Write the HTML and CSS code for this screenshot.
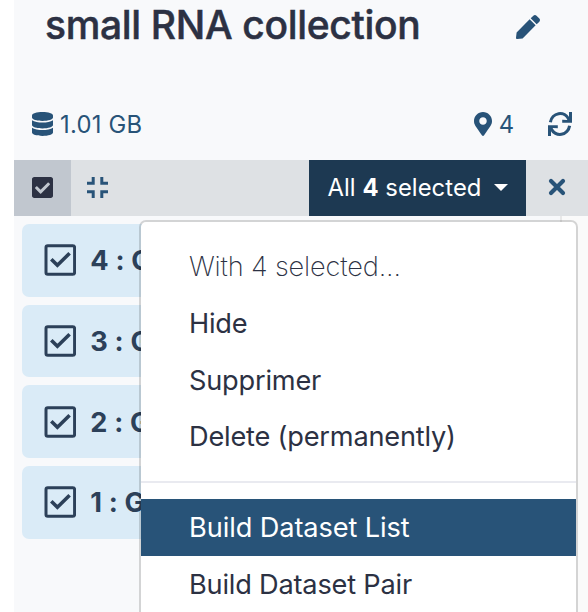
FILE: index.html
```html
<!DOCTYPE html>
<html lang="en">
<head>
<meta charset="utf-8">
<title>small RNA collection</title>
<link rel="stylesheet" href="styles.css">
</head>
<body>
<svg class="defs" aria-hidden="true">
  <symbol id="item-check" viewBox="0 0 32 32">
    <rect x="2" y="1.7" width="28.6" height="28.6" rx="1.8" fill="none" stroke="currentColor" stroke-width="3"/>
    <path d="M7.300 15.200l6.100 6.100L25.600 9.300" fill="none" stroke="currentColor" stroke-width="3.600"/>
  </symbol>
</svg>
<main class="panel">
  <header class="title-row">
    <h1>small RNA collection</h1>
    <svg class="pen" viewBox="0 0 512 512"><path d="M290.74 93.24l128.02 128.02-277.99 277.99-114.14 12.6C11.35 513.54-1.56 500.62.14 485.34l12.7-114.22 277.9-277.88zm207.2-19.06l-60.11-60.11c-18.75-18.75-49.16-18.75-67.91 0l-56.55 56.55 128.02 128.02 56.55-56.55c18.75-18.76 18.75-49.16 0-67.91z"/></svg>
  </header>
  <div class="stats">
    <svg class="db" viewBox="0 0 448 512"><path d="M448 73.143v45.714C448 159.143 347.667 192 224 192S0 159.143 0 118.857V73.143C0 32.857 100.333 0 224 0s224 32.857 224 73.143zM448 176v102.857C448 319.143 347.667 352 224 352S0 319.143 0 278.857V176c48.125 33.143 136.208 48.572 224 48.572S399.874 209.143 448 176zm0 160v102.857C448 479.143 347.667 512 224 512S0 479.143 0 438.857V336c48.125 33.143 136.208 48.572 224 48.572S399.874 369.143 448 336z"/></svg>
    <span class="size">1.01 GB</span>
    <svg class="pin" viewBox="0 0 384 512"><path d="M172.268 501.67C26.97 291.031 0 269.413 0 192 0 85.961 85.961 0 192 0s192 85.961 192 192c0 77.413-26.97 99.031-172.268 309.67-9.535 13.774-29.93 13.773-39.464 0zM192 272c44.183 0 80-35.817 80-80s-35.817-80-80-80-80 35.817-80 80 35.817 80 80 80z"/></svg>
    <span class="count">4</span>
    <svg class="sync" viewBox="0 0 24 24"><g fill="none" stroke="currentColor" stroke-width="3.1"><path d="M2.4 10.2A9.8 10.300 0 0 1 20.800 7.200"/><path d="M21.600 13.800A9.800 10.300 0 0 1 3.200 16.800"/></g><path d="M21 0H24v10.700H14.200V7.700l4.800.2 2-1.700zM3 24H0V13.300h9.800v3l-4.800-.2-2 1.700z"/></svg>
  </div>
  <div class="toolbar">
    <div class="select-all"><svg viewBox="0 0 448 448"><path d="M400 448H48c-26.510 0-48-21.490-48-48V48C0 21.490 21.490 0 48 0h352c26.510 0 48 21.490 48 48v352c0 26.510-21.490 48-48 48zM195.314 350.627l184-184c6.248-6.248 6.248-16.379 0-22.627l-22.627-22.627c-6.248-6.248-16.379-6.249-22.628 0L184 271.431l-70.059-70.059c-6.248-6.248-16.379-6.248-22.628 0l-22.627 22.627c-6.248 6.248-6.248 16.379 0 22.627l104 104c6.249 6.249 16.379 6.249 22.628.001z"/></svg></div>
    <svg class="compress" viewBox="0 0 21 21"><path d="M0 6.200h6.200V0M14.800 0v6.200H21M0 14.800h6.200V21M14.800 21v-6.200H21"/></svg>
    <button class="selected">All <b>4</b> selected<i class="caret"></i></button>
    <svg class="close" viewBox="0 0 18 18"><path d="M3 3l12 12M15 3L3 15"/></svg>
  </div>
  <div class="content">
    <div class="list">
      <div class="item"><svg><use href="#item-check"/></svg><span>4 : G</span></div>
      <div class="item"><svg><use href="#item-check"/></svg><span>3 : G</span></div>
      <div class="item"><svg><use href="#item-check"/></svg><span>2 : G</span></div>
      <div class="item"><svg><use href="#item-check"/></svg><span>1 : G</span></div>
    </div>
    <div class="track"></div>
    <div class="menu">
      <div class="entry heading">With 4 selected...</div>
      <div class="entry">Hide</div>
      <div class="entry">Supprimer</div>
      <div class="entry">Delete (permanently)</div>
      <div class="divider"></div>
      <div class="entry active">Build Dataset List</div>
      <div class="entry">Build Dataset Pair</div>
    </div>
  </div>
</main>
</body>
</html>
```
FILE: styles.css
```css
* { box-sizing: border-box; }
html, body { height: 100%; }
body {
  margin: 0;
  overflow: hidden;
  background: #fff;
  color: #2c3143;
  font: 27.2px/1.5 Inter, "Liberation Sans", sans-serif;
}
svg { display: block; flex: none; fill: currentColor; }
.defs { position: absolute; width: 0; height: 0; }
.panel {
  display: flex;
  flex-direction: column;
  height: 612px;
  margin-left: 14px;
  background: #f8f9fb;
}
.title-row {
  display: flex;
  align-items: center;
  justify-content: space-between;
  height: 50px;
  padding: 0 48px 0 31px;
}
h1 { margin: 0; font-size: 39px; font-weight: 500; letter-spacing: -.33px; -webkit-text-stroke: .5px currentColor; line-height: 50px; white-space: nowrap; }
.pen { width: 24px; height: 24px; color: #285378; margin-top: 4px; }
.stats {
  display: flex;
  align-items: center;
  height: 48px;
  margin: 50px 0 12px;
  padding: 0 16px 0 18px;
  color: #285378;
  font-size: 23.8px;
}
.db { width: 21px; height: 24px; }
.size { margin-left: 7px; margin-top: 2px; letter-spacing: .25px; }
.pin { width: 18px; height: 24px; margin-left: auto; }
.count { margin-left: 7px; margin-top: 2px; }
.sync { width: 24px; height: 24px; margin-left: 34px; }
.toolbar {
  display: flex;
  align-items: center;
  flex: none;
  height: 56px;
  background: #dee1e4;
}
.select-all {
  display: flex;
  align-items: center;
  justify-content: center;
  width: 57px;
  height: 56px;
  background: #c1c7cf;
}
.select-all svg { width: 21px; height: 21px; margin-top: -2px; }
.compress { width: 21px; height: 21px; margin-left: 16px; margin-top: -1px; fill: none; stroke: #285378; stroke-width: 3; }
.selected {
  display: flex;
  align-items: center;
  width: 217px;
  height: 56px;
  margin-left: auto;
  padding: 0 0 0 18.5px;
  border: 0;
  background: #1d3952;
  color: #fff;
  font: 23.8px/36px Inter, "Liberation Sans", sans-serif;
  letter-spacing: .06px;
  white-space: pre;
}
.caret {
  margin-left: 13px;
  margin-top: -2px;
  border: 7px solid transparent;
  border-top-color: #fff;
  border-bottom: 0;
}
.close { width: 18px; height: 18px; margin: 0 22px; margin-top: -2px; fill: none; stroke: #285378; stroke-width: 4.2; stroke-linecap: round; }
.content { display: flex; position: relative; flex: 1; min-height: 0; overflow: hidden; }
.list {
  display: flex;
  flex-direction: column;
  gap: 8px;
  flex: 1;
  padding: 8px;
}
.item {
  display: flex;
  align-items: center;
  flex: none;
  height: 72.7px;
  padding-left: 22px;
  border-radius: 7px;
  background: #daebf7;
  color: #2c4059;
  font-weight: 700;
}
.item svg { width: 32px; height: 32px; margin-right: 14.3px; }
.item span { padding-top: 2.4px; letter-spacing: .15px; }
.track { width: 28px; border-left: 2px solid #e8e8e8; background: #fafafa; }
.menu {
  position: absolute;
  top: 4px;
  left: 125px;
  width: 439px;
  height: 450px;
  padding: 16px 0;
  overflow: hidden;
  border: 2px solid rgba(0, 0, 0, .15);
  border-radius: 7px;
  background: #fff;
  background-clip: padding-box;
}
.entry { height: 56.8px; padding: 9px 48px 7px; letter-spacing: -.21px; white-space: nowrap; }
.heading { font-weight: 200; letter-spacing: -.15px; }
.active { background: #285378; color: #fff; letter-spacing: -.1px; }
.divider { height: 2px; margin: 16px 0; background: #e9eaf0; }
```
